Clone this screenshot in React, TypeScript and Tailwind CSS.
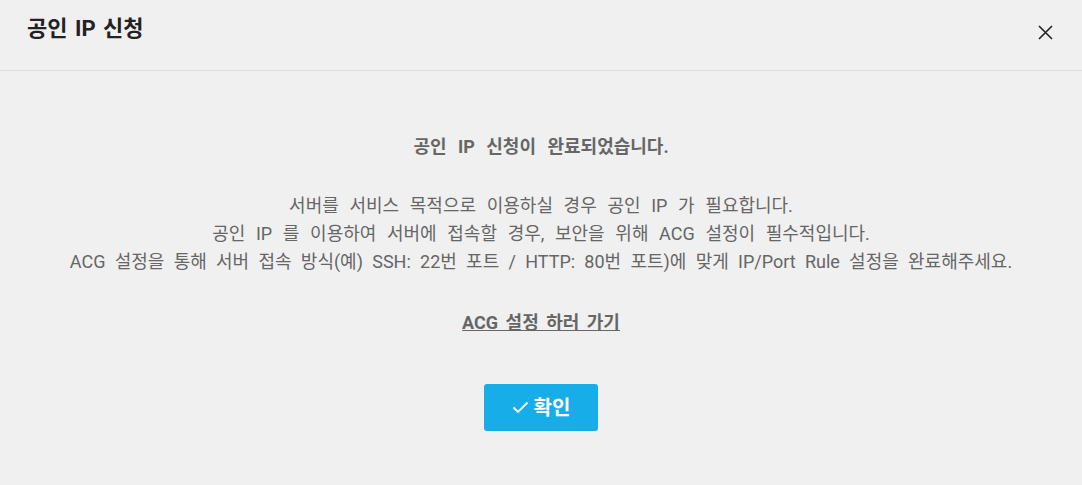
import React from "react";

export default function App() {
  const font = { fontFamily: 'Roboto, "Noto Sans CJK KR", sans-serif' };
  return (
    <div className="w-[1082px] h-[485px] bg-[#f0f0f0] flex flex-col" style={font}>
      <div className="h-[71px] border-b border-[#dcdcdc] flex items-center justify-between pl-[27px] pr-[27px]">
        <h1 className="text-[22px] font-bold text-[#222] mt-[-14px] [word-spacing:2px]">공인 IP 신청</h1>
        <button className="w-[20px] h-[20px] flex items-center justify-center text-[#222] mt-[-6px]">
          <svg width="17" height="17" viewBox="0 0 17 17" fill="none" stroke="currentColor" strokeWidth="1.6">
            <path d="M2 2L15 15M15 2L2 15" />
          </svg>
        </button>
      </div>
      <div className="flex flex-col items-center text-[#666] pt-[61px]">
        <p className="text-[18px] font-bold leading-[30px] [word-spacing:7px]">공인 IP 신청이 완료되었습니다.</p>
        <div className="mt-[30px] text-[18px] leading-[28px] text-center">
          <p className="[word-spacing:6.2px]">서버를 서비스 목적으로 이용하실 경우 공인 IP 가 필요합니다.</p>
          <p className="[word-spacing:6.2px]">공인 IP 를 이용하여 서버에 접속할 경우, 보안을 위해 ACG 설정이 필수적입니다.</p>
          <p className="[word-spacing:4.8px]">ACG 설정을 통해 서버 접속 방식(예) SSH: 22번 포트 / HTTP: 80번 포트)에 맞게 IP/Port Rule 설정을 완료해주세요.</p>
        </div>
        <a className="mt-[32px] text-[18px] font-bold underline leading-[30px] text-[#666] [word-spacing:3px]">ACG 설정 하러 가기</a>
        <button className="mt-[46px] w-[114px] h-[47px] bg-[#17ade8] rounded-[3px] text-white text-[20px] font-bold flex items-center justify-center gap-[5px]">
          <svg width="17" height="13" viewBox="0 0 17 13" fill="none" stroke="white" strokeWidth="1.8">
            <path d="M1.5 6.5L6 11L15.5 1.5" />
          </svg>
          확인
        </button>
      </div>
    </div>
  );
}
